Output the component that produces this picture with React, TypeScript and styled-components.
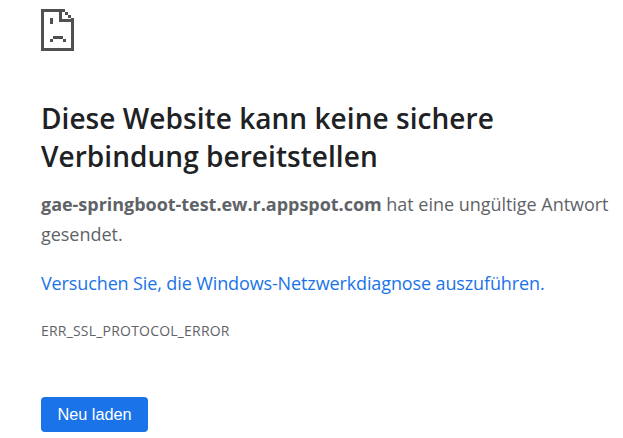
import React from "react";
import styled, { createGlobalStyle } from "styled-components";

const GlobalStyle = createGlobalStyle`
    html, body {
        margin:0;
        padding:0;
        background:#fff;
        overflow:hidden;
    }
`
const Page = styled.div`
    width:623px;
    height:438px;
    box-sizing:border-box;
    padding:9px 0 0 41px;
    font-family:"Open Sans", "Noto Sans", sans-serif;
    color:#5f6368;
    overflow:hidden;
`
const ErrorIcon = styled.svg`
    display:block;
    width:36px;
    height:42px;
    shape-rendering:crispEdges;
`
const Heading = styled.h1`
    margin:48px 0 0;
    width:570px;
    font-size:28px;
    font-weight:600;
    line-height:38px;
    letter-spacing:0.05px;
    color:#202124;
`
const Message = styled.p`
    margin:14px 0 0;
    width:575px;
    font-size:18px;
    line-height:30px;
    letter-spacing:-0.03px;
`
const Host = styled.strong`
    font-weight:700;
`
const Suggestion = styled.a`
    display:block;
    margin-top:19px;
    font-size:18px;
    line-height:30px;
    letter-spacing:-0.12px;
    color:#1a73e8;
    text-decoration:none;
`
const ErrorCode = styled.div`
    margin-top:23px;
    font-size:14px;
    line-height:20px;
    letter-spacing:0.2px;
    text-transform:uppercase;
`
const ReloadButton = styled.button`
    display:block;
    margin-top:56px;
    width:107px;
    height:35px;
    padding:0;
    border:none;
    border-radius:4px;
    background:#1a73e8;
    color:#fff;
    font-family:"Liberation Sans", Arial, sans-serif;
    font-size:16.3px;
`

const iconPixels = [
    [0, 0, 24, 3], [0, 3, 3, 36], [0, 39, 33, 3], [30, 9, 3, 30],
    [24, 3, 3, 3], [27, 6, 3, 3],
    [18, 3, 3, 10], [21, 10, 9, 3],
    [9, 9, 3, 6],
    [12, 27, 10, 3], [9, 30, 3, 3], [22, 30, 3, 3],
]

function App() {
    return (
        <Page>
            <GlobalStyle />
            <ErrorIcon viewBox="0 0 36 42">
                {iconPixels.map(([x, y, w, h]) => (
                    <rect key={`${x}-${y}`} x={x} y={y} width={w} height={h} fill="#505050" />
                ))}
            </ErrorIcon>
            <Heading>Diese Website kann keine sichere Verbindung bereitstellen</Heading>
            <Message><Host>gae-springboot-test.ew.r.appspot.com</Host> hat eine ungültige Antwort gesendet.</Message>
            <Suggestion>Versuchen Sie, die Windows-Netzwerkdiagnose auszuführen.</Suggestion>
            <ErrorCode>ERR_SSL_PROTOCOL_ERROR</ErrorCode>
            <ReloadButton>Neu laden</ReloadButton>
        </Page>
    )
}

export default App
